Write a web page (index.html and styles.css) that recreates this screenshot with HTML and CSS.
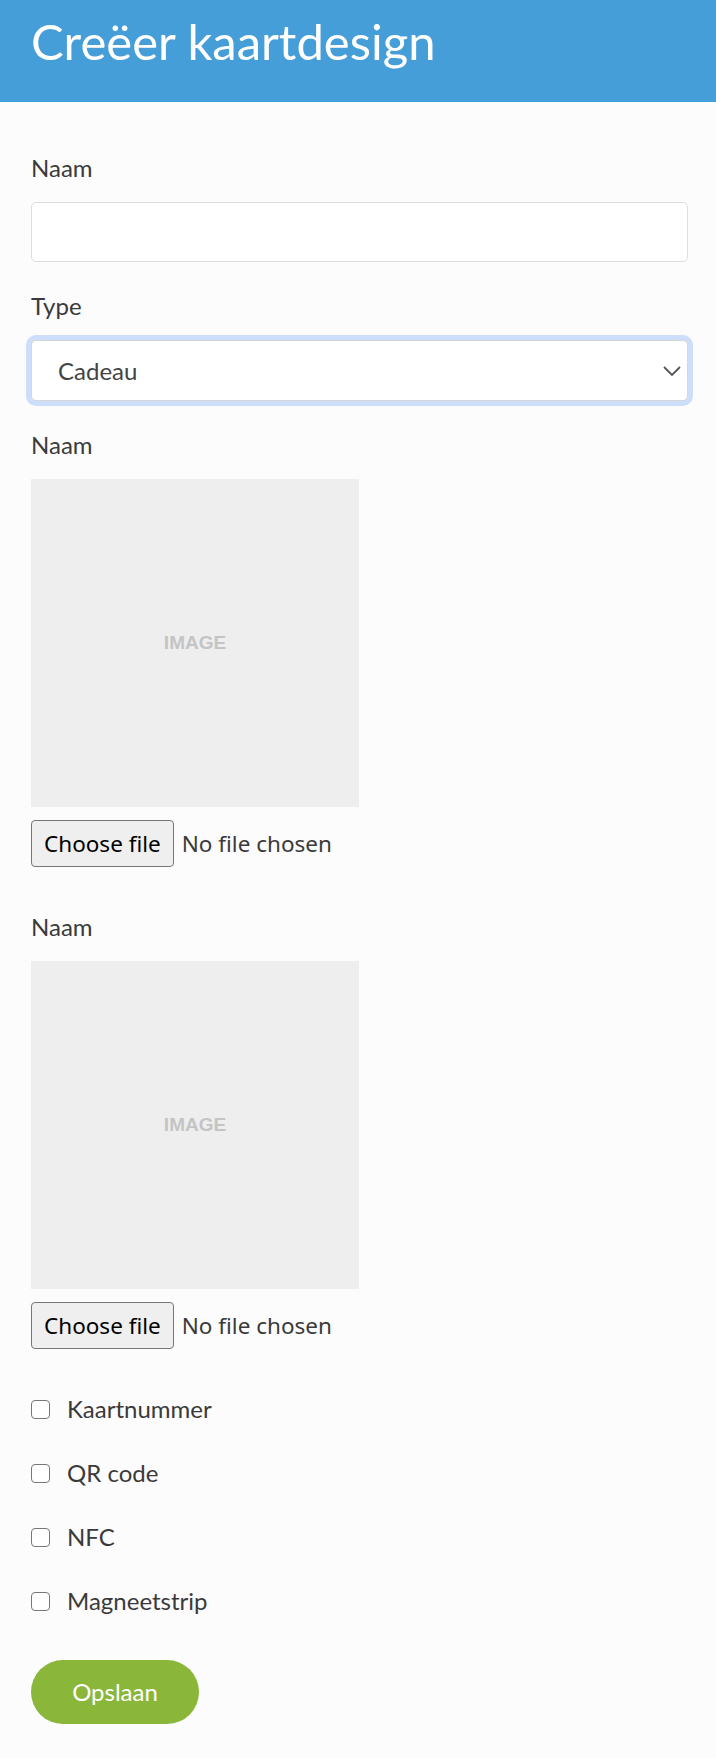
FILE: index.html
```html
<!DOCTYPE html>
<html lang="nl">
<head>
    <meta charset="UTF-8">
    <meta name="viewport" content="width=device-width, initial-scale=1.0">
    <title>Creëer kaartdesign</title>
    <link rel="stylesheet" href="styles.css">
</head>
<body>
    <header class="topbar">
        <h1>Creëer kaartdesign</h1>
    </header>

    <form class="design-form">
        <div class="field">
            <label for="name">Naam</label>
            <input type="text" id="name" class="input">
        </div>

        <div class="field">
            <label for="type">Type</label>
            <div class="select-wrap">
                <select id="type" class="input select">
                    <option>Cadeau</option>
                    <option>Klant</option>
                </select>
                <svg class="chevron" width="18" height="10" viewBox="0 0 18 10"><path d="M1 1l8 8 8-8" fill="none" stroke="#555" stroke-width="1.8"/></svg>
            </div>
        </div>

        <div class="field field-file">
            <label>Naam</label>
            <div class="preview">IMAGE</div>
            <label class="file">
                <input type="file" class="file-input">
                <span class="file-btn">Choose file</span>
                <span class="file-name">No file chosen</span>
            </label>
        </div>

        <div class="field field-file">
            <label>Naam</label>
            <div class="preview">IMAGE</div>
            <label class="file">
                <input type="file" class="file-input">
                <span class="file-btn">Choose file</span>
                <span class="file-name">No file chosen</span>
            </label>
        </div>

        <div class="checks">
            <label class="check"><input type="checkbox"> Kaartnummer</label>
            <label class="check"><input type="checkbox"> QR code</label>
            <label class="check"><input type="checkbox"> NFC</label>
            <label class="check"><input type="checkbox"> Magneetstrip</label>
        </div>

        <button type="button" class="btn">Opslaan</button>
    </form>
</body>
</html>
```

FILE: styles.css
```css
body {
    margin: 0;
    background-color: #fcfcfc;
    font-family: Lato, "Open Sans", sans-serif;
    font-size: 24px;
    line-height: 36px;
    color: #3a3a3a;
}
.topbar {
    height: 102px;
    box-sizing: border-box;
    padding: 14px 31px 0;
    background-color: #469ed9;
}
.topbar h1 {
    margin: 0;
    font-size: 49px;
    line-height: 55px;
    font-weight: 400;
    color: #fff;
}
.design-form {
    padding: 48px 28px 40px 31px;
}
.field {
    margin-bottom: 26px;
}
.field > label {
    display: block;
    margin-bottom: 16px;
}
.input {
    display: block;
    width: 100%;
    height: 60px;
    box-sizing: border-box;
    margin: 0;
    border: 1px solid #dedede;
    border-radius: 5px;
    background-color: #fff;
    font: inherit;
    color: #444;
}
.select-wrap {
    position: relative;
}
.select {
    height: 61px;
    padding: 0 50px 0 26px;
    appearance: none;
    -webkit-appearance: none;
    border-color: #d6d6d6;
    box-shadow: 0 0 0 5px #cddefa;
    outline: none;
}
.chevron {
    position: absolute;
    right: 7px;
    top: 26px;
    pointer-events: none;
}
.preview {
    display: flex;
    align-items: center;
    justify-content: center;
    width: 328px;
    height: 328px;
    background-color: #eee;
    font-family: "Liberation Sans", Arial, sans-serif;
    font-weight: bold;
    font-size: 19px;
    color: #c4c4c4;
}
.field-file {
    margin-bottom: 42px;
}
.field-file .file {
    display: flex;
    align-items: center;
    margin-top: 13px;
    font-family: "Noto Sans", sans-serif;
    font-size: 22.5px;
    line-height: 29px;
}
.file-input {
    display: none;
}
.file-btn {
    padding: 8px 12px;
    border: 1px solid #767676;
    border-radius: 4px;
    background-color: #efefef;
    color: #000;
}
.file-name {
    margin-left: 8px;
    color: #3a3a3a;
}
.checks {
    margin-top: 40px;
}
.check {
    display: flex;
    align-items: center;
    gap: 17px;
    margin-bottom: 28px;
}
.check input {
    appearance: none;
    -webkit-appearance: none;
    width: 19px;
    height: 19px;
    margin: 0;
    border: 1.5px solid #777;
    border-radius: 4px;
    background-color: #fff;
}
.btn {
    display: block;
    width: 168px;
    height: 64px;
    margin-top: 41px;
    border: none;
    border-radius: 32px;
    background-color: #8ab63a;
    color: #fff;
    font: inherit;
}
```
